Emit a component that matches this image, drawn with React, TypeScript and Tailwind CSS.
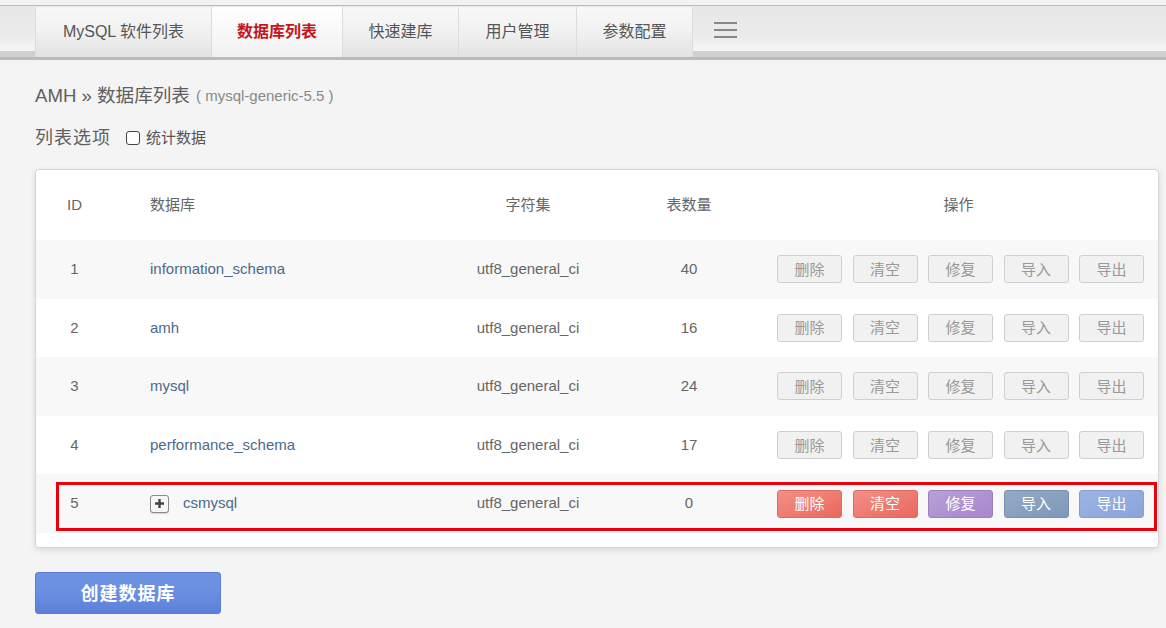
import React from 'react'

const font = { fontFamily: '"Liberation Sans", Arial, "Noto Sans CJK SC", sans-serif' }

const tabs = [
  { label: 'MySQL 软件列表', w: 'w-[176px]' },
  { label: '数据库列表', w: 'w-[131px]', active: true },
  { label: '快速建库', w: 'w-[116px]' },
  { label: '用户管理', w: 'w-[118px]' },
  { label: '参数配置', w: 'w-[116px]' },
]

const rows = [
  { id: 1, name: 'information_schema', count: 40 },
  { id: 2, name: 'amh', count: 16 },
  { id: 3, name: 'mysql', count: 24 },
  { id: 4, name: 'performance_schema', count: 17 },
  { id: 5, name: 'csmysql', count: 0, hot: true },
]

const actions = ['删除', '清空', '修复', '导入', '导出']

const hotStyles = [
  'bg-gradient-to-br from-[#f39087] to-[#e9675d] border-[#dc6c63] text-white',
  'bg-gradient-to-br from-[#f39087] to-[#e9675d] border-[#dc6c63] text-white',
  'bg-gradient-to-br from-[#b9a0d6] to-[#a687cc] border-[#9b80c0] text-white',
  'bg-gradient-to-br from-[#93aac6] to-[#7f98b8] border-[#7890b0] text-white',
  'bg-gradient-to-br from-[#9db4e4] to-[#8aa3da] border-[#86a0d4] text-white',
]

const ActionButton = ({ label, hot, idx }: { label: string; hot?: boolean; idx: number }) => (
  <button
    className={
      'w-[65px] h-[28px] rounded-[3px] border text-[15px] leading-none flex items-center justify-center ' +
      (hot ? hotStyles[idx] : 'bg-[#f1f1f1] border-[#cfcfcf] text-[#999]')
    }
  >
    {label}
  </button>
)

const PlusIcon = () => (
  <span className="w-[19px] h-[18px] rounded-[3px] border border-[#8a8a8a] bg-[#f6f6f6] flex items-center justify-center shadow-[0_1px_1px_rgba(0,0,0,0.15)]">
    <svg width="11" height="11" viewBox="0 0 11 11">
      <path d="M5.5 1v9M1 5.5h9" stroke="#444" strokeWidth="2.4" />
    </svg>
  </span>
)

export default function App() {
  return (
    <div className="w-[1166px] h-[628px] bg-[#f4f4f4] text-[#666] overflow-hidden" style={font}>
      {/* top navigation */}
      <div className="h-[5px] bg-[#f2f2f2]" />
      <div className="h-px bg-[#bcbcbc]" />
      <div className="h-[51px] bg-[linear-gradient(to_bottom,#e7e7e7_0,#ebebeb_30px,#f5f5f5_45px,#d0d0d0_45px,#d0d0d0_51px)] pt-px pl-[35px] flex items-start">
        {tabs.map((t) => (
          <div
            key={t.label}
            className={
              t.w +
              ' h-[50px] flex items-center justify-center border-l border-[#dcdcdc] text-[16px] ' +
              (t.active
                ? 'bg-gradient-to-b from-white to-[#f1f1f1] text-[#c4161c] font-bold'
                : 'bg-gradient-to-b from-[#f8f8f8] via-[#f1f1f1] to-[#e2e2e2] text-[#555]')
            }
          >
            {t.label}
          </div>
        ))}
        <div className="w-px h-[50px] bg-[#dcdcdc]" />
        <div className="ml-[21px] h-[45px] flex flex-col justify-center gap-[5px]">
          <span className="block w-[23px] h-[2px] bg-[#888]" />
          <span className="block w-[23px] h-[2px] bg-[#888]" />
          <span className="block w-[23px] h-[2px] bg-[#888]" />
        </div>
      </div>
      <div className="h-[3px] bg-[#bbb]" />

      <div className="px-[35px]">
        {/* title */}
        <div className="mt-[24px] h-[24px] flex items-center text-[#5f5f5f]">
          <span className="text-[18.6px]">AMH » 数据库列表</span>
          <span className="ml-[6px] text-[15px] text-[#888]">( mysql-generic-5.5 )</span>
        </div>

        {/* list options */}
        <div className="mt-[18px] h-[24px] flex items-center text-[#5f5f5f]">
          <span className="text-[18px] tracking-[1px]">列表选项</span>
          <span className="ml-[15px] w-[14px] h-[14px] rounded-[3px] border border-[#444] bg-white" />
          <span className="ml-[6px] text-[15px] text-[#555]">统计数据</span>
        </div>

        {/* table card */}
        <div className="mt-[19px] w-[1124px] bg-white border border-[#d6d6d6] rounded-[4px] shadow-[0_2px_6px_rgba(0,0,0,0.12)] pb-[14px]">
          <div className="h-[70px] flex items-center text-[15px] text-[#666]">
            <div className="w-[77px] text-center">ID</div>
            <div className="w-[335px] pl-[37px]">数据库</div>
            <div className="w-[160px] text-center">字符集</div>
            <div className="w-[162px] text-center">表数量</div>
            <div className="flex-1 pl-[7px] pr-[18px] text-center">操作</div>
          </div>
          {rows.map((r, i) => (
            <div
              key={r.id}
              className={'relative h-[58.6px] flex items-center text-[15px] ' + (i % 2 === 0 ? 'bg-[#f8f8f8]' : 'bg-white')}
            >
              <div className="w-[77px] text-center text-[#666]">{r.id}</div>
              <div className="w-[335px] pl-[37px] flex items-center gap-[14px] text-[#4b6a8c]">
                {r.hot && <PlusIcon />}
                <span>{r.name}</span>
              </div>
              <div className="w-[160px] text-center text-[#666]">utf8_general_ci</div>
              <div className="w-[162px] text-center text-[#666]">{r.count}</div>
              <div className="flex-1 pl-[7px] flex gap-[10.5px]">
                {actions.map((a, k) => (
                  <ActionButton key={a} label={a} hot={r.hot} idx={k} />
                ))}
              </div>
              {r.hot && (
                <div className="absolute left-[20px] right-px top-[8px] bottom-[2px] border-[3px] border-[#e8000b] pointer-events-none" />
              )}
            </div>
          ))}
        </div>

        {/* create button */}
        <button className="mt-[24px] w-[186px] h-[42px] rounded-[3px] bg-gradient-to-b from-[#6f93e3] via-[#6a8fe2] to-[#5b7fd8] border border-[#5b7ed4] text-white text-[18px] font-bold tracking-[1px] flex items-center justify-center pt-[3px]">
          创建数据库
        </button>
      </div>
    </div>
  )
}
